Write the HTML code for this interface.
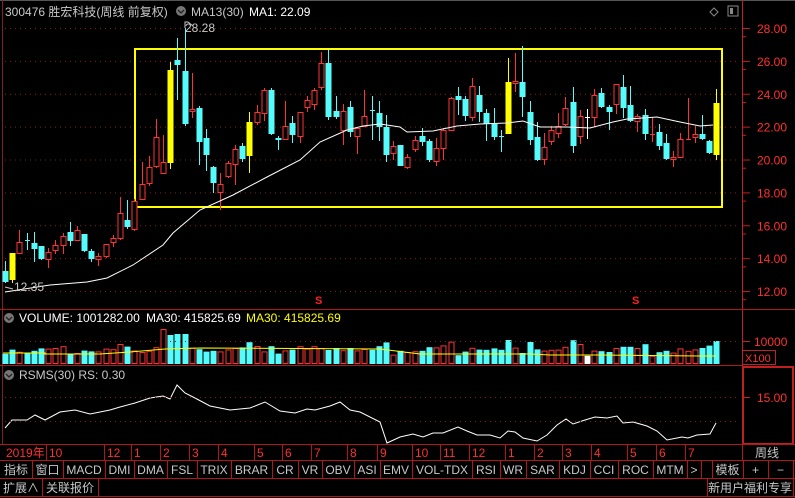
<!DOCTYPE html>
<html><head><meta charset="utf-8">
<style>
html,body{margin:0;padding:0;background:#000;width:795px;height:498px;overflow:hidden}
svg{display:block}
text{font-family:"Liberation Sans","Noto Sans CJK SC",sans-serif}
</style></head>
<body>
<svg id="s" width="795" height="498" xmlns="http://www.w3.org/2000/svg">
<rect width="795" height="498" fill="#000"/>
<line x1="0" y1="0.5" x2="795" y2="0.5" stroke="#555"/>
<line x1="2.5" y1="0" x2="2.5" y2="444" stroke="#802020"/>
<g id="grid"></g>
<rect x="135" y="49" width="587" height="158" fill="none" stroke="#ffff00" stroke-width="2"/>
<g id="candles"></g>
<polyline id="ma" fill="none" stroke="#fff" stroke-width="1"/>
<g id="vol"></g>
<polyline id="rs" fill="none" stroke="#fff" stroke-width="1"/>
<text x="5" y="16" fill="#c8c8c8" font-size="12">300476 胜宏科技(周线 前复权)</text>
<circle cx="181" cy="11" r="5" fill="#777"/><path d="M178 10 l3 3 l3 -3" stroke="#222" fill="none" stroke-width="1.3"/>
<text x="191" y="16" fill="#c8c8c8" font-size="12">MA13(30)</text>
<text x="249" y="16" fill="#fff" font-size="12">MA1: 22.09</text>
<text x="185" y="32" fill="#c8c8c8" font-size="12">28.28</text>
<path d="M185 28 v-6 h3 l5 4" stroke="#c8c8c8" fill="none"/>
<text x="14" y="291" fill="#c8c8c8" font-size="12">12.35</text>
<path d="M5 287 l8 2" stroke="#c8c8c8"/>
<path d="M710 12 l4 -4 l4 4 l-4 4z" stroke="#888" fill="none"/>
<rect x="728" y="6" width="10" height="10" fill="none" stroke="#888"/><rect x="730" y="8" width="3" height="6" fill="#888"/>
<text x="315" y="304" fill="#ff2020" font-size="11" font-weight="bold">S</text>
<text x="632" y="304" fill="#ff2020" font-size="11" font-weight="bold">S</text>
<line x1="742.5" y1="0" x2="742.5" y2="444" stroke="#c02020"/>
<g id="axis"></g>
<line x1="0" y1="309.5" x2="795" y2="309.5" stroke="#b01818"/>
<line x1="0" y1="365.5" x2="742" y2="365.5" stroke="#b01818"/>
<circle cx="9" cy="318" r="5" fill="#777"/><path d="M6 317 l3 3 l3 -3" stroke="#222" fill="none" stroke-width="1.3"/>
<text x="19" y="322" fill="#fff" font-size="12">VOLUME: 1001282.00</text>
<text x="146" y="322" fill="#fff" font-size="12">MA30: 415825.69</text>
<text x="246" y="322" fill="#ffff00" font-size="12">MA30: 415825.69</text>
<line x1="5" y1="341.5" x2="740" y2="341.5" stroke="#802020" stroke-dasharray="1,4"/>
<text x="754" y="346" fill="#ff3030" font-size="12">10000</text>
<line x1="742" y1="341.5" x2="750" y2="341.5" stroke="#c02020"/>
<rect x="742.5" y="350.5" width="33" height="14" fill="none" stroke="#c02020"/>
<text x="745" y="362" fill="#ff3030" font-size="11">X100</text>
<circle cx="9" cy="375" r="5" fill="#777"/><path d="M6 374 l3 3 l3 -3" stroke="#222" fill="none" stroke-width="1.3"/>
<text x="19" y="379" fill="#c8c8c8" font-size="12">RSMS(30)  RS: 0.30</text>
<line x1="5" y1="397.5" x2="740" y2="397.5" stroke="#802020" stroke-dasharray="1,4"/>
<line x1="5" y1="421.5" x2="740" y2="421.5" stroke="#802020" stroke-dasharray="1,4"/>
<rect x="743" y="367" width="50" height="77" fill="none" stroke="#c02020" stroke-width="2"/>
<line x1="743" y1="397.5" x2="750" y2="397.5" stroke="#c02020"/>
<text x="757" y="402" fill="#ff3030" font-size="12">15.00</text>
<line x1="0" y1="444.5" x2="795" y2="444.5" stroke="#b01818"/>
<line x1="0" y1="460.5" x2="795" y2="460.5" stroke="#b01818"/>
<line x1="0" y1="478.5" x2="795" y2="478.5" stroke="#b01818"/>
<line x1="0" y1="496.5" x2="795" y2="496.5" stroke="#b01818"/>
<g id="dates"></g>
<text x="755" y="457" fill="#c8c8c8" font-size="12">周线</text>
<g id="tb"></g>
</svg>
<script>
var NS="http://www.w3.org/2000/svg";
function el(p,t,a,txt){var e=document.createElementNS(NS,t);for(var k in a)e.setAttribute(k,a[k]);if(txt!=null)e.textContent=txt;p.appendChild(e);return e;}
var g=document.getElementById('grid'),ax=document.getElementById('axis');
for(var v=28;v>=12;v-=2){var y=28+(28-v)*16.44;
 el(g,'line',{x1:5,y1:y+.5,x2:740,y2:y+.5,stroke:'#802020','stroke-dasharray':'1,4'});
 el(ax,'line',{x1:742,y1:y+.5,x2:750,y2:y+.5,stroke:'#c02020'});
 el(ax,'line',{x1:742,y1:y+8.7,x2:746,y2:y+8.7,stroke:'#c02020'});
 el(ax,'text',{x:757,y:y+5,fill:'#ff3030','font-size':12},v.toFixed(2));}
var C=[[5,271,282,'c',261,283],[12,253,280,'y',253,283],[19,242,253,'r',230,253],[27,240,241,'c',233,250],[34,243,249,'c',232,262],[41,246,259,'c',246,260],[48,252,259,'r',248,268],[55,245,250,'r',240,254],[63,236,245,'r',233,254],[70,232,241,'c',222,246],[77,230,240,'r',226,241],[84,234,251,'c',234,252],[91,251,259,'c',249,262],[98,256,259,'r',253,266],[106,244,256,'r',244,258],[113,238,242,'r',235,247],[120,213,238,'r',197,240],[127,220,227,'c',200,229],[134,201,229,'r',199,231],
[142,184,199,'r',162,200],[149,167,183,'r',156,186],[156,137,166,'r',119,168],[163,162,173,'r',135,174],[170,70,163,'y',62,169],[177,60,65,'c',38,100],[185,71,124,'c',28,126],[192,109,111,'r',73,118],[199,108,142,'c',106,165],[206,138,155,'c',129,171],[213,167,183,'c',166,193],[220,184,192,'r',173,210],[228,163,176,'r',161,178],[235,149,164,'r',145,185],[242,146,159,'c',143,162],[249,122,156,'y',112,173],[257,112,122,'r',105,125],[264,90,113,'r',88,121],[271,90,134,'c',88,135],[278,138,140,'c',136,150],[285,126,139,'r',101,140],[292,123,135,'c',116,143],[300,112,136,'r',112,143],[307,100,107,'r',96,112],[314,90,104,'r',88,110],[321,63,87,'r',52,90],[328,63,117,'c',50,120],[336,111,117,'c',96,119],[343,111,130,'r',104,145],[350,107,132,'c',101,137],[357,128,136,'r',128,154],[364,116,126,'r',90,127],[372,110,111,'c',96,140],[379,113,127,'c',101,141],[386,127,155,'c',115,162],[393,146,153,'r',141,160],[400,145,166,'c',145,166],
[407,157,167,'r',154,169],[415,140,149,'r',136,152],[422,136,142,'c',128,146],[429,141,160,'c',139,162],[436,148,161,'r',138,166],[443,130,148,'r',128,160],[451,98,130,'r',97,131],[458,96,100,'c',87,115],[465,99,116,'c',96,121],[472,86,117,'r',78,121],[479,95,112,'c',86,122],[486,113,124,'c',109,141],[494,124,137,'c',108,140],[501,136,137,'c',130,152],[508,82,134,'y',58,134],[515,81,83,'r',53,92],[522,82,97,'c',46,117],[530,112,140,'c',101,145],[537,137,160,'c',122,161],[544,147,159,'r',133,165],[551,130,141,'r',126,145],[558,126,133,'r',113,138],[565,108,124,'r',97,126],[573,102,146,'c',87,153],[580,116,136,'r',110,144],[587,117,118,'w',109,139],[594,95,117,'r',89,127],[601,93,107,'c',88,108],[609,107,112,'c',105,130],[616,84,104,'r',84,114],[623,87,108,'c',75,118],[630,105,121,'c',86,122],[637,116,121,'r',114,132],[645,115,134,'c',109,140],[652,134,135,'r',117,142],[659,132,146,'c',124,150],[666,143,159,'c',134,160],[673,157,159,'r',151,167],[680,139,157,'r',133,157],[688,139,140,'r',98,140],[695,134,137,'r',126,143],[702,134,139,'c',115,140],[709,141,153,'c',140,154],[716,103,155,'y',89,160]];
var cg=document.getElementById('candles'),vg=document.getElementById('vol');
var col={r:'#ff3232',c:'#54fcfc',y:'#ffff00',w:'#ffffff'};
var specialV={163:35,170:29,177:30,185:30,198:18,321:16,328:14,336:16,716:23,530:22,536:22,557:16};
C.forEach(function(c,i){var x=c[0],t=c[1],b=c[2],k=c[3],s=col[k];
 el(cg,'line',{x1:x+.5,y1:c[4],x2:x+.5,y2:c[5],stroke:s});
 if(b-t<2){el(cg,'line',{x1:x-2,y1:t+.5,x2:x+3,y2:t+.5,stroke:s});}
 else if(k=='r'){el(cg,'rect',{x:x-2,y:t+.5,width:5,height:b-t,fill:'#000',stroke:s});}
 else el(cg,'rect',{x:x-2.5,y:t,width:6,height:b-t,fill:s});
 var h=specialV[x]||Math.max(6,Math.min(24,8+(b-t)*0.2+((i*37)%9)));
 if(k=='r'){el(vg,'rect',{x:x-2,y:364-h+.5,width:5,height:h-1,fill:'#000',stroke:s});}
 else el(vg,'rect',{x:x-2.5,y:364-h,width:6,height:h,fill:k=='y'?'#54fcfc':s});
});
el(vg,'polyline',{points:'3,353 45,353 45,354 100,354 130,352 165,349 200,348 380,349 420,354 530,354 550,355 600,355 700,356 716,356',fill:'none',stroke:'#ffff00'});
document.getElementById('ma').setAttribute('points','5,292 50,285 87,282 107,278 133,265 163,245 173,233 200,210 233,195 267,177 300,160 320,142 347,130 363,126 380,124 400,127 407,132 433,131 457,126 480,124 507,123 523,121 540,127 567,127 590,128 613,122 627,119 657,117 680,122 700,126 713,125');
document.getElementById('rs').setAttribute('points','5,428 12,420 27,420 35,415 45,420 60,412 75,410 90,414 110,410 120,407 135,403 150,398 163,396 170,399 177,385 185,393 195,398 210,406 230,410 250,408 265,402 280,411 295,413 307,409 315,410 330,406 340,402 350,410 360,412 380,422 387,443 400,437 413,434 423,437 433,433 443,433 458,427 467,431 477,435 490,435 500,438 508,431 515,432 523,438 537,441 547,435 557,425 566,419 573,424 585,420 595,417 607,418 617,416 623,423 633,422 647,426 657,431 667,440 682,437 688,438 697,435 710,434 716,423');
var dg=document.getElementById('dates');
[[6,'2019年'],[49,'10'],[107,'12'],[134,'1'],[163,'2'],[192,'3'],[221,'4'],[257,'5'],[285,'6'],[314,'7'],[350,'8'],[380,'9'],[415,'10'],[443,'11'],[472,'12'],[508,'1'],[537,'2'],[565,'3'],[594,'4'],[630,'5'],[659,'6'],[688,'7']].forEach(function(d){
 if(d[0]>10)el(dg,'line',{x1:d[0]-2.5,y1:444,x2:d[0]-2.5,y2:460,stroke:'#b01818'});
 el(dg,'text',{x:d[0],y:457,fill:'#ff3030','font-size':12},d[1]);});
el(dg,'line',{x1:742.5,y1:444,x2:742.5,y2:460,stroke:'#b01818'});
var tb=document.getElementById('tb');
var r1=[[0,32,'指标'],[32,63,'窗口'],[63,105,'MACD'],[105,134,'DMI'],[134,167,'DMA'],[167,197,'FSL'],[197,231,'TRIX'],[231,272,'BRAR'],[272,298,'CR'],[298,322,'VR'],[322,354,'OBV'],[354,380,'ASI'],[380,412,'EMV'],[412,472,'VOL-TDX'],[472,500,'RSI'],[500,526,'WR'],[526,559,'SAR'],[559,590,'KDJ'],[590,618,'CCI'],[618,653,'ROC'],[653,687,'MTM'],[687,701,'>'],[701,712,''],[712,743,'模板'],[743,768,'+'],[768,793,'−']];
r1.forEach(function(c){el(tb,'line',{x1:c[1]+.5,y1:460,x2:c[1]+.5,y2:478,stroke:'#b01818'});
 el(tb,'text',{x:(c[0]+c[1])/2,y:474,fill:'#c8c8c8','font-size':12,'text-anchor':'middle'},c[2]);});
[[0,42,'扩展∧'],[42,98,'关联报价'],[707,793,'新用户福利专享']].forEach(function(c){
 el(tb,'line',{x1:c[1]+.5,y1:478,x2:c[1]+.5,y2:496,stroke:'#b01818'});
 if(c[0]>0)el(tb,'line',{x1:c[0]+.5,y1:478,x2:c[0]+.5,y2:496,stroke:'#b01818'});
 el(tb,'text',{x:(c[0]+c[1])/2,y:492,fill:'#c8c8c8','font-size':12,'text-anchor':'middle'},c[2]);});
</script>
</body></html>
